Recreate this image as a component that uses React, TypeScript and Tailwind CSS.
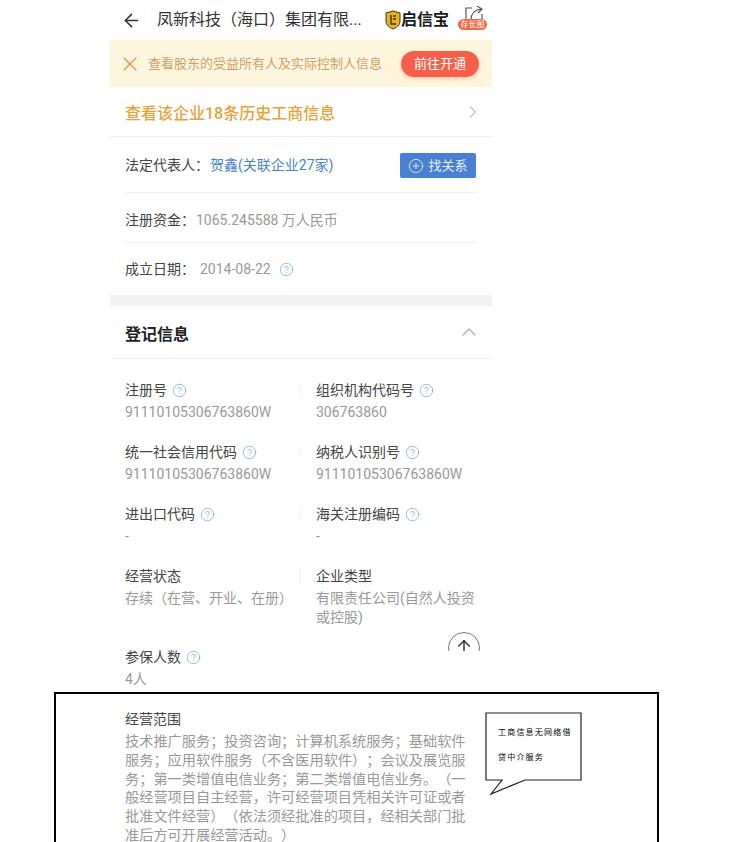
import { ArrowLeft, ArrowUp, ChevronRight, ChevronUp, CircleHelp, CirclePlus, X } from 'lucide-react';

const font = { fontFamily: 'Roboto, "Noto Sans CJK SC", sans-serif' };

function Help() {
  return <CircleHelp size={15} strokeWidth={1} className="text-[#5b93d3] shrink-0" />;
}

function Field({ label, value, help, right }: { label: string; value: string; help?: boolean; right?: boolean }) {
  return (
    <div className="mb-[20px]">
      <div className={`h-[20px] flex items-center gap-[5px] text-[14px] text-[#444] ${right ? 'pl-[16px]' : ''}`}>
        {right && <span className="absolute ml-[-16px] h-[14px] w-px bg-[#f0f0f0]" />}
        <span>{label}</span>
        {help && <Help />}
      </div>
      <div className={`mt-[3px] text-[14px] leading-[19px] text-[#999] ${right ? 'pl-[16px]' : ''}`}>{value}</div>
    </div>
  );
}

export default function App() {
  return (
    <div className="h-[842px] w-[746px] overflow-hidden bg-white [text-spacing-trim:space-all]" style={font}>
      <div className="relative ml-[110px] w-[382px]">
        {/* Header */}
        <header className="h-[40px] flex items-center pl-[11px]">
          <ArrowLeft size={21} strokeWidth={1.8} className="text-[#333]" />
          <span className="ml-[15px] w-[210px] text-[16px] text-[#333] whitespace-nowrap">凤新科技（海口）集团有限...</span>
          <svg width="16" height="20" viewBox="0 0 16 20" className="ml-[18px] shrink-0">
            <path d="M8 1 L15 3 V11 C15 15 11 18 8 19 C5 18 1 15 1 11 V3 Z" fill="#e9b31c" stroke="#3d3310" strokeWidth="1" />
            <path d="M6 5 V14 H11 M8 6 H11 M8 9 H11" fill="none" stroke="#3d3310" strokeWidth="1.4" />
          </svg>
          <span className="text-[16px] font-bold text-[#1a1a1a] leading-none">启信宝</span>
          <div className="relative ml-[9px] h-[26px] w-[29px] shrink-0">
            <svg width="22" height="16" viewBox="0 0 22 16" className="absolute left-[5px] top-[-1px]" fill="none" stroke="#555" strokeWidth="1.2">
              <path d="M9 2 H3 V14" />
              <path d="M19 8 V14" />
              <path d="M8 14 C8 8 11 4 18 3 M14 0 L19 3 L15 7" />
            </svg>
            <span className="absolute left-0 top-[12px] h-[11px] w-[29px] rounded-full bg-[#f0694a] text-white text-[8px] leading-[11px] text-center whitespace-nowrap">存长图</span>
          </div>
        </header>

        {/* Banner */}
        <div className="h-[47px] flex items-center bg-[#fef6dc] pl-[8px]">
          <X size={24} strokeWidth={1.5} className="text-[#e49a5c]" />
          <span className="ml-[6px] text-[13px] text-[#c9a26a] whitespace-nowrap">查看股东的受益所有人及实际控制人信息</span>
          <button className="ml-[19px] h-[26px] w-[78px] rounded-full bg-[#f4604a] text-white text-[13px] shadow-[0_2px_4px_rgba(244,96,74,0.3)]">前往开通</button>
        </div>

        <div className="h-[50px] flex items-center justify-between border-b border-[#f0f0f0] pl-[15px] pr-[9px]">
          <span className="pt-[4px] text-[16px] font-medium text-[#e8a13a]">查看该企业18条历史工商信息</span>
          <ChevronRight size={20} strokeWidth={1.5} className="text-[#c4c4c4]" />
        </div>

        {/* Basic info */}
        <div className="px-[15px]">
          <div className="h-[56px] flex items-center justify-between border-b border-[#f0f0f0] pt-[2px]">
            <span className="text-[14px] text-[#444]">
              法定代表人：<span className="ml-px text-[#4a84cc]">贺鑫(关联企业27家)</span>
            </span>
            <button className="h-[25px] w-[76px] mr-px flex items-center justify-center gap-[4px] rounded-[2px] bg-[#4a80d0] text-white text-[13px]">
              <CirclePlus size={16} strokeWidth={1.2} />
              <span className="text-[#e6eefb]">找关系</span>
            </button>
          </div>
          <div className="h-[50px] flex items-center border-b border-[#f0f0f0] pt-[5px] text-[14px] text-[#444]">
            注册资金：<span className="ml-px text-[#999]">1065.245588 万人民币</span>
          </div>
          <div className="h-[52px] flex items-center text-[14px] text-[#444]">
            成立日期：<span className="ml-[5px] text-[#999]">2014-08-22</span>
            <span className="ml-[8px]"><Help /></span>
          </div>
        </div>

        <div className="h-[11px] bg-[#f2f2f2]" />

        <div className="h-[53px] flex items-center justify-between border-b border-[#f0f0f0] pl-[15px] pr-[11px]">
          <span className="pt-[6px] text-[16px] font-bold text-[#222]">登记信息</span>
          <ChevronUp size={24} strokeWidth={1.2} className="text-[#aaa]" />
        </div>

        {/* Registration grid */}
        <div className="grid grid-cols-[175px_1fr] pl-[15px] pr-[14px] pt-[21px] pb-[3px]">
          <Field label="注册号" value="91110105306763860W" help />
          <Field label="组织机构代码号" value="306763860" help right />
          <Field label="统一社会信用代码" value="91110105306763860W" help />
          <Field label="纳税人识别号" value="91110105306763860W" help right />
          <Field label="进出口代码" value="-" help />
          <Field label="海关注册编码" value="-" help right />
          <Field label="经营状态" value="存续（在营、开业、在册）" />
          <Field label="企业类型" value="有限责任公司(自然人投资或控股)" right />
          <div>
            <div className="h-[20px] flex items-center gap-[5px] text-[14px] text-[#444]">
              <span>参保人数</span>
              <Help />
            </div>
            <div className="mt-[3px] text-[14px] leading-[19px] text-[#999]">4人</div>
          </div>
        </div>

        {/* Back to top, cut off by the capture */}
        <div className="absolute left-[338px] top-[632px] h-[19px] w-[32px] overflow-hidden">
          <div className="h-[32px] w-[32px] rounded-full border border-[#777] bg-white flex justify-center items-start pt-[4px]">
            <ArrowUp size={18} strokeWidth={2} className="text-[#333]" />
          </div>
        </div>
      </div>

      {/* Framed lower part */}
      <div className="relative ml-[54px] h-[160px] w-[605px] border-2 border-black pl-[69px] pt-[16px]">
        <div className="text-[14px] leading-[18px] text-[#444]">经营范围</div>
        <p className="mt-[4px] w-[342px] text-[14.2px] leading-[18.8px] text-[#999]">
          技术推广服务；投资咨询；计算机系统服务；基础软件服务；应用软件服务（不含医用软件）；会议及展览服务；第一类增值电信业务；第二类增值电信业务。（一般经营项目自主经营，许可经营项目凭相关许可证或者批准文件经营）（依法须经批准的项目，经相关部门批准后方可开展经营活动。）
        </p>

        {/* Callout */}
        <div className="absolute left-[429px] top-[18px] h-[84px] w-[99px]">
          <svg width="99" height="84" viewBox="0 0 99 84" className="absolute inset-0" fill="white" stroke="#222" strokeWidth="1.2">
            <path d="M1 1 H96 V68 H40 L6 82 L17 68 H1 Z" />
          </svg>
          <div className="absolute left-[13px] top-[8px] w-[80px] text-[8px] leading-[25px] tracking-[1.2px] text-black">
            工商信息无网络借<br />贷中介服务
          </div>
        </div>
      </div>
    </div>
  );
}
